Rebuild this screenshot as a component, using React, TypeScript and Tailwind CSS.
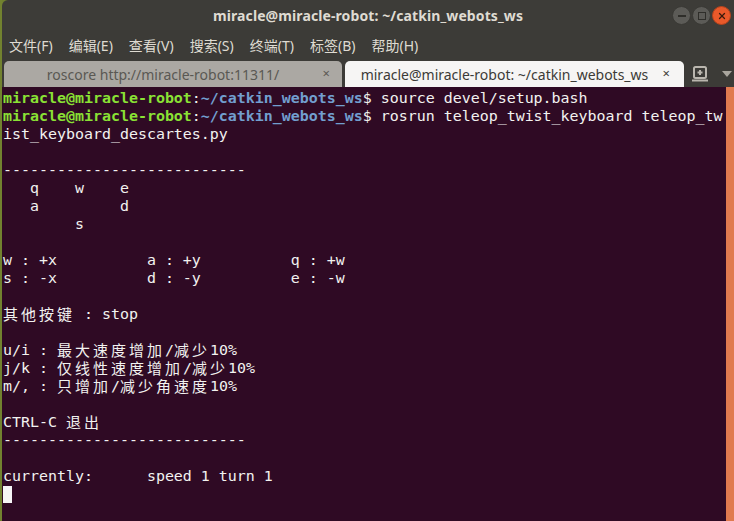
import React from 'react';
import { X } from 'lucide-react';

type Seg = { t: string; c?: string };

const PROMPT_USER = 'text-[#8ae234] font-bold';
const PROMPT_PATH = 'text-[#729fcf] font-bold';

const LINES: Seg[][] = [
  [{ t: 'miracle@miracle-robot', c: PROMPT_USER }, { t: ':' }, { t: '~/catkin_webots_ws', c: PROMPT_PATH }, { t: '$ source devel/setup.bash' }],
  [{ t: 'miracle@miracle-robot', c: PROMPT_USER }, { t: ':' }, { t: '~/catkin_webots_ws', c: PROMPT_PATH }, { t: '$ rosrun teleop_twist_keyboard teleop_tw' }],
  [{ t: 'ist_keyboard_descartes.py' }],
  [{ t: '' }],
  [{ t: '---------------------------' }],
  [{ t: '   q    w    e' }],
  [{ t: '   a         d' }],
  [{ t: '        s' }],
  [{ t: '' }],
  [{ t: 'w : +x          a : +y          q : +w' }],
  [{ t: 's : -x          d : -y          e : -w' }],
  [{ t: '' }],
  [{ t: '其他按键 : stop' }],
  [{ t: '' }],
  [{ t: 'u/i : 最大速度增加/减少10%' }],
  [{ t: 'j/k : 仅线性速度增加/减少10%' }],
  [{ t: 'm/, : 只增加/减少角速度10%' }],
  [{ t: '' }],
  [{ t: 'CTRL-C 退出' }],
  [{ t: '---------------------------' }],
  [{ t: '' }],
  [{ t: 'currently:      speed 1 turn 1' }],
];

const MENU = ['文件(F)', '编辑(E)', '查看(V)', '搜索(S)', '终端(T)', '标签(B)', '帮助(H)'];

const WIDE = /[\u3000-\u9fff\uff00-\uffef]/;

// wide (CJK) chars take two terminal cells
function renderText(text: string) {
  const parts = text.split(/([\u3000-\u9fff\uff00-\uffef]+)/);
  return parts.map((p, i) =>
    WIDE.test(p) ? (
      <React.Fragment key={i}>
        {Array.from(p).map((ch, k) => (
          <span
            key={k}
            className="inline-block w-[18px] text-left font-['Noto_Sans_CJK_SC',sans-serif] text-[15px] leading-[18px] align-top"
          >
            {ch}
          </span>
        ))}
      </React.Fragment>
    ) : (
      <span key={i}>{p}</span>
    )
  );
}

const WinButton: React.FC<{ kind: 'min' | 'max' | 'close' }> = ({ kind }) => (
  <div
    className={`w-[19px] h-[19px] rounded-full flex items-center justify-center border ${
      kind === 'close'
        ? 'bg-[#e9592a] border-[#b8431c]'
        : 'bg-[#5c5b57] border-[#3a3935]'
    }`}
  >
    {kind === 'min' && <div className="w-[8px] h-[2px] bg-[#2f2e2a]" />}
    {kind === 'max' && <div className="w-[8px] h-[8px] border-[1.5px] border-[#2f2e2a]" />}
    {kind === 'close' && <X className="w-[10px] h-[10px] text-[#3a1a0c]" strokeWidth={3} />}
  </div>
);

export default function App() {
  return (
    <div className="w-[734px] h-[521px] flex overflow-hidden bg-[#6f7f2e] font-['Noto_Sans','Noto_Sans_CJK_SC',sans-serif]">
      <div className="w-[2px] shrink-0 bg-[#72822f]" />
      <div className="flex-1 flex flex-col min-w-0">
        {/* Title bar */}
        <div className="h-[30px] shrink-0 bg-[#3d3c38] rounded-tl-[6px] relative flex items-center justify-center">
          <span className="text-[14px] font-bold text-[#dfdbd2] tracking-[0.1px]">
            miracle@miracle-robot: ~/catkin_webots_ws
          </span>
          <div className="absolute right-[3px] top-[6px] flex gap-[1px]">
            <WinButton kind="min" />
            <WinButton kind="max" />
            <WinButton kind="close" />
          </div>
        </div>

        {/* Menu bar */}
        <div className="h-[30px] shrink-0 bg-[#3c3b37] flex items-center gap-[16px] pl-[7px] text-[14px] text-[#dfdbd2]">
          {MENU.map((m) => (
            <span key={m}>{m}</span>
          ))}
        </div>

        {/* Tabs */}
        <div className="h-[27px] shrink-0 bg-[#3c3b37] flex items-end pl-[2px] gap-[3px]">
          <div className="w-[338px] h-[26px] bg-[#aba8a3] rounded-t-[5px] flex items-center relative">
            <span className="flex-1 text-center text-[14px] text-[#5a5853] pr-[20px]">
              roscore http://miracle-robot:11311/
            </span>
            <span className="absolute right-[12px] text-[13px] text-[#5a5853]">×</span>
          </div>
          <div className="w-[339px] h-[26px] bg-[#f6f5f4] rounded-t-[5px] flex items-center relative">
            <span className="flex-1 text-center text-[14px] text-[#3c3b37] pr-[20px]">
              miracle@miracle-robot: ~/catkin_webots_ws
            </span>
            <span className="absolute right-[14px] text-[13px] text-[#3c3b37]">×</span>
          </div>
          <div className="flex-1 h-[26px] flex items-center justify-between pl-[4px] pr-[2px]">
            <svg width="18" height="16" viewBox="0 0 18 16" fill="none">
              <rect x="3" y="1" width="12" height="11" rx="1.5" stroke="#bab6ae" strokeWidth="2" />
              <path d="M1 14.5h16" stroke="#bab6ae" strokeWidth="2" />
              <path d="M9 4v5M6.5 6.5h5" stroke="#bab6ae" strokeWidth="2" />
            </svg>
            <svg width="10" height="6" viewBox="0 0 10 6">
              <path d="M0 0h10L5 6z" fill="#a9a59d" />
            </svg>
          </div>
        </div>

        {/* Terminal */}
        <div className="flex-1 flex bg-[#2f0a24] min-h-0">
          <div className="flex-1 pt-[2px] pl-[1px] font-['DejaVu_Sans_Mono',monospace] text-[14.95px] leading-[18px] text-[#f2f2f0] whitespace-pre overflow-hidden">
            {LINES.map((line, i) => (
              <div key={i} className="h-[18px]">
                {line.map((s, j) => (
                  <span key={j} className={s.c}>
                    {renderText(s.t)}
                  </span>
                ))}
              </div>
            ))}
            <div className="h-[18px] flex items-center">
              <div className="w-[9px] h-[17px] bg-[#f6f6f6]" />
            </div>
          </div>
          <div className="w-[8px] shrink-0 bg-[#e07a4f]" />
        </div>
      </div>
    </div>
  );
}
